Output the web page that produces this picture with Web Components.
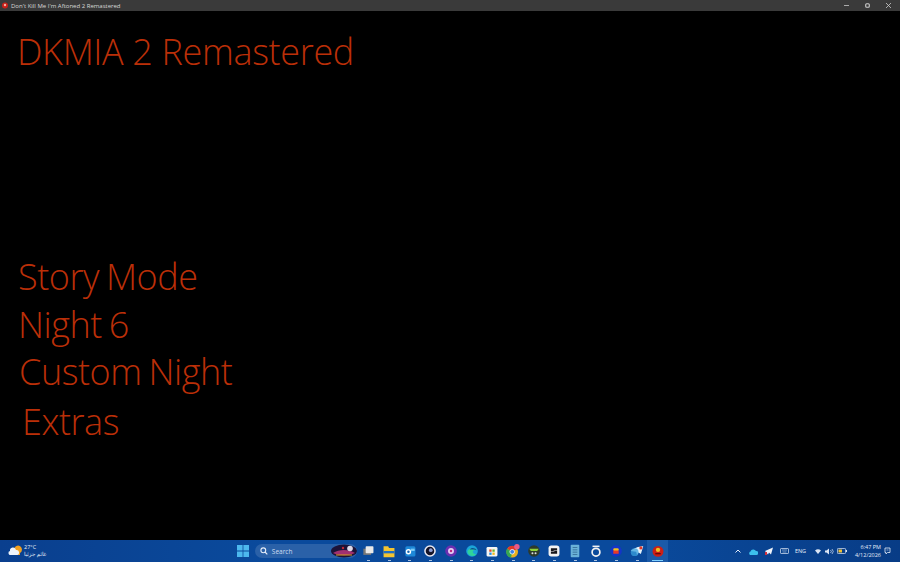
<!DOCTYPE html>
<html lang="en"><head><meta charset="utf-8"><title>DKMIA 2 Remastered</title>
<style>
html,body{margin:0;padding:0;height:100%;background:#000;overflow:hidden}
body{display:flex;flex-direction:column;width:900px;height:562px}
</style></head><body>
<app-titlebar>Don't Kill Me I'm Aftoned 2 Remastered</app-titlebar>
<game-screen>
  <span slot="title">DKMIA 2 Remastered</span>
  <menu-item>Story Mode</menu-item>
  <menu-item>Night 6</menu-item>
  <menu-item>Custom Night</menu-item>
  <menu-item>Extras</menu-item>
</game-screen>
<win-taskbar></win-taskbar>
<script>
function def(name,html,setup){customElements.define(name,class extends HTMLElement{constructor(){super();const r=this.attachShadow({mode:'open'});r.innerHTML=html;}connectedCallback(){setup&&setup(this)}})}

def('app-titlebar',`<style>
:host{display:flex;align-items:center;flex:none;height:11px;background:#3a3a3a;color:#d8d8d8;font:6px/10px "Open Sans",sans-serif}
svg{display:block}
.ic{margin:0 3px 0 2px}
.t{flex:1;white-space:nowrap;padding-top:1px}
.b{display:flex;gap:16px;padding-right:9px;align-items:center;margin-top:-1px}
</style>
<svg class="ic" width="6" height="7" viewBox="0 0 6 7"><circle cx="3" cy="3.500" r="3" fill="#c8201a"/><circle cx="3" cy="3" r="1.200" fill="#f2b0a0"/></svg>
<span class="t"><slot></slot></span>
<span class="b">
<svg width="5" height="5" viewBox="0 0 5 5"><path d="M0 2.500h5" stroke="#aaa" stroke-width="1"/></svg>
<svg width="5" height="5" viewBox="0 0 5 5"><rect x=".7" y=".7" width="3.600" height="3.600" rx="1" fill="none" stroke="#ccc" stroke-width="1.100"/></svg>
<svg width="5" height="5" viewBox="0 0 5 5"><path d="M0 0l5 5M5 0l-5 5" stroke="#ccc" stroke-width=".8"/></svg>
</span>`);

def('game-screen',`<style>
:host{display:flex;flex-direction:column;flex:1;min-height:0;background:#000;color:#bb2f08;font-family:"Open Sans",sans-serif;font-weight:300}
.title{font-size:36px;line-height:42px;letter-spacing:-.35px;padding:20px 0 0 17px;white-space:nowrap}
.menu{display:flex;flex-direction:column;margin-top:180px;padding-left:19px}
</style>
<div class="title"><slot name="title"></slot></div>
<div class="menu"><slot></slot></div>`);

def('menu-item',`<style>
:host{display:block;font-size:36px;line-height:47.500px;letter-spacing:-.45px;word-spacing:-2px;white-space:nowrap}
:host(:last-child){margin-left:3px;margin-top:2.500px}
:host(:nth-child(2)){margin-left:-1px}
:host(:nth-child(3)){margin-left:-1px}
</style><slot></slot>`);

const icons=[
`<rect x="3" y="6" width="10" height="8" fill="#777"/><rect x="6" y="3" width="10" height="9" rx="1" fill="#e8e8e8"/>`,
`<path d="M2 3h6l1 2h7v12H2z" fill="#f4c430"/><rect x="2" y="9" width="14" height="3" fill="#1f6fc4"/>`,
`<rect x="3" y="3" width="13" height="13" rx="2" fill="#1e88d8"/><circle cx="7" cy="10" r="3.500" fill="#fff"/><circle cx="7" cy="10" r="1.600" fill="#1565b0"/><path d="M10 6h5v3h-5z" fill="#7cc8f5"/>`,
`<circle cx="9" cy="9" r="7.500" fill="#e8e8f2"/><circle cx="9" cy="9" r="5.500" fill="#141428"/><circle cx="10" cy="8" r="2.400" fill="#8ea0d8"/>`,
`<circle cx="9" cy="9" r="7.500" fill="#6a2fb0"/><circle cx="9" cy="9" r="3.800" fill="#e6d0f5"/><circle cx="9" cy="9" r="1.600" fill="#c02a80"/>`,
`<circle cx="9" cy="9" r="7.500" fill="#1ba3d8"/><path d="M3 10c1-5 9-7 12-2-3-1-5 0-5 2s3 4 5 3c-3 4-11 3-12-3z" fill="#2fd39a"/><path d="M6 7c3-3 7-2 9 1-3-1-6-1-9-1z" fill="#0b4c95"/>`,
`<rect x="2" y="4" width="14" height="12" rx="1.500" fill="#f4f4f4"/><rect x="5.500" y="7" width="3" height="3" fill="#e24a2a"/><rect x="9.500" y="7" width="3" height="3" fill="#6ab82c"/><rect x="5.500" y="11" width="3" height="3" fill="#2a90e0"/><rect x="9.500" y="11" width="3" height="3" fill="#f4b820"/>`,
`<circle cx="8" cy="10" r="7.500" fill="#e8b020"/><path d="M8 10L1.500 6a7.500 7.500 0 0 1 13 0z" fill="#e0392b"/><path d="M8 10L1.500 6a7.500 7.500 0 0 0 5 11.500z" fill="#34a853"/><circle cx="8" cy="10" r="3" fill="#3a80e8" stroke="#fff"/><circle cx="14" cy="3.500" r="3.500" fill="#e85a8a"/>`,
`<circle cx="9" cy="9" r="7.500" fill="#2c3a2c"/><path d="M3 6h12l-2 3H5z" fill="#8ed03a"/><circle cx="7" cy="12" r="1.300" fill="#ddd"/><circle cx="11" cy="12" r="1.300" fill="#ddd"/>`,
`<rect x="2" y="2" width="14" height="14" rx="3.500" fill="#f2f2f2"/><path d="M5 5.500h8v2.500H8.500v.8H13v3.700H5V10h4.500v-.8H5z" fill="#16161c"/>`,
`<rect x="3.500" y="1" width="11" height="16" rx="1" fill="#6ab2d8"/><path d="M6 4.500h6M6 7.500h6M6 10.500h6M6 13.500h6" stroke="#2a5f88" stroke-width=".9"/>`,
`<circle cx="9" cy="10.500" r="5" fill="none" stroke="#f2f2f2" stroke-width="2.200"/><path d="M4.500 3h9" stroke="#f2f2f2" stroke-width="2"/>`,
`<circle cx="9" cy="9" r="7.500" fill="#1535c8"/><path d="M5.500 10a3.500 3.500 0 0 1 7 0v2.500h-7z" fill="#e8382a"/><rect x="5.500" y="5.500" width="7" height="3" rx="1.500" fill="#f2c020"/>`,
`<path d="M1 9c3-3 10-6 16-6l-3 10-3-2-2 3-1-4z" fill="#e8f4fb"/><circle cx="6" cy="10.500" r="5" fill="#3aa0dc" opacity=".75"/><circle cx="14" cy="5" r="2" fill="#e03a2a"/>`,
`<circle cx="9" cy="9.500" r="7" fill="#cc1f16"/><circle cx="9" cy="7.500" r="2.800" fill="#f0c020"/><path d="M5.500 12.500h7" stroke="#5a0808" stroke-width="1.500"/>`
];

def('win-taskbar',`<style>
:host{display:grid;grid-template-columns:1fr auto 1fr;align-items:center;flex:none;height:22px;background:linear-gradient(90deg,#0a3f8e,#0a4a9c 30%,#0a4a9c 70%,#083c86);color:#e8eef8;font-family:"Open Sans","DejaVu Sans",sans-serif}
svg{display:block}
.wx{display:flex;align-items:center;gap:2px;padding-left:8px}
.wxt{font-size:5.500px;line-height:7px}
.mid{display:flex;align-items:center;margin-left:5px}
.start{width:12px;height:12px;margin-right:6px}
.search{display:flex;align-items:center;width:102px;height:14px;border-radius:7px;background:#2a61a8;box-sizing:border-box;padding-left:5px;font-size:6.500px;gap:4px;color:#cfdcf0;position:relative;overflow:hidden;margin-right:1px}
.logo{position:absolute;right:0;top:0}
.apps{display:flex}
.app{width:20.700px;height:22px;display:flex;align-items:center;justify-content:center;position:relative}
.app.on{background:#1a5aa8}
.app::after{content:"";position:absolute;left:9px;bottom:1px;width:3px;height:1px;background:#a8c0e0}
.app.on::after{left:5px;width:11px;background:#7fd0ff}
.tray{display:flex;align-items:center;justify-content:flex-end;font-size:5.500px;color:#e4ecf8}
.s{display:flex;justify-content:center;align-items:center}
.clk{text-align:right;line-height:8px;width:32px;font-size:5.500px}
</style>
<div class="wx">
<svg width="14" height="14" viewBox="0 0 14 14"><path d="M6 5a4 4 0 1 1 6 4v2H6z" fill="#f0a020"/><path d="M2 7a3 3 0 0 1 6-1 2.500 2.500 0 0 1 1 5H3a2 2 0 0 1-1-4z" fill="#eef3fa"/></svg>
<div class="wxt"><div>27°C</div><div lang="ar" dir="rtl">غائم جزئيا</div></div>
</div>
<div class="mid">
<svg class="start" viewBox="0 0 12 12"><path d="M0 0h5.600v5.600H0zM6.400 0H12v5.600H6.400zM0 6.400h5.600V12H0zM6.400 6.400H12V12H6.400z" fill="#4cb8ee"/></svg>
<div class="search">
<svg width="8" height="8" viewBox="0 0 8 8"><circle cx="3.300" cy="3.300" r="2.400" fill="none" stroke="#e4ecf8" stroke-width="1.100"/><path d="M5 5l2.300 2.300" stroke="#e4ecf8" stroke-width="1.200"/></svg>
<span>Search</span>
<svg class="logo" width="26" height="14" viewBox="0 0 26 14"><ellipse cx="13" cy="7" rx="13" ry="6.500" fill="#1c1238"/><path d="M2 9c6-4 16-4 22 0-6 3-16 3-22 0z" fill="#a03070"/><path d="M5 11l16 0" stroke="#d8a020"/><circle cx="19" cy="4.500" r="2.800" fill="#dcd8e8"/><circle cx="12" cy="4" r="1.200" fill="#c02838"/></svg>
</div>
<div class="apps" id="apps"></div>
</div>
<div class="tray">
<span class="s" style="width:16px"><svg width="6" height="4" viewBox="0 0 6 4"><path d="M.5 3.500L3 1l2.500 2.500" fill="none" stroke="#e4ecf8"/></svg></span>
<span class="s" style="width:15px"><svg width="9" height="7" viewBox="0 0 9 7"><path d="M1 7a2 2 0 0 1 .5-3.500A3 3 0 0 1 7 3a2 2 0 0 1 .5 4z" fill="#3cc0ec"/></svg></span>
<span class="s" style="width:15px"><svg width="8" height="8" viewBox="0 0 8 8"><path d="M0 4l8-3.500-2 7-2-2-1 2z" fill="#f0f4fa"/><rect x="0" y="5" width="2" height="3" fill="#d03040"/></svg></span>
<span class="s" style="width:16px"><svg width="9" height="6" viewBox="0 0 9 6"><rect x=".5" y=".5" width="8" height="5" rx=".6" fill="none" stroke="#c8d6ea" stroke-width=".8"/><path d="M2 2h5M2.500 4h4" stroke="#c8d6ea" stroke-width=".6"/></svg></span>
<span class="s" style="width:17px">ENG</span>
<span class="s" style="width:12px;margin-left:3px"><svg width="6" height="5" viewBox="0 0 6 5"><path d="M0 1.500a4.500 4.500 0 0 1 6 0L3 5z" fill="#dbe5f4"/></svg></span>
<span class="s" style="width:11px"><svg width="9" height="7" viewBox="0 0 9 7"><path d="M0 2.500h1.500L4 .5v6L1.500 4.500H0z" fill="#dbe5f4"/><path d="M5.500 2a2 2 0 0 1 0 3M7 1a3.500 3.500 0 0 1 0 5" fill="none" stroke="#dbe5f4" stroke-width=".7"/></svg></span>
<span class="s" style="width:14px"><svg width="10" height="6" viewBox="0 0 10 6"><rect x=".4" y=".4" width="8.200" height="5.200" rx="1" fill="none" stroke="#dbe5f4" stroke-width=".8"/><rect x="1.500" y="1.500" width="3.500" height="3" fill="#f0c030"/><rect x="9" y="2" width="1" height="2" fill="#dbe5f4"/></svg></span>
<span class="clk"><div>6:47 PM</div><div>4/12/2026</div></span>
<span class="s" style="width:13px;padding-right:6px"><svg width="7" height="8" viewBox="0 0 7 8"><path d="M1 1h5v4.500H3.500L2 7V5.500H1z" fill="none" stroke="#e4ecf8" stroke-width=".8"/><path d="M2.500 3h2" stroke="#e4ecf8" stroke-width=".6"/></svg></span>
</div>`,el=>{
 const a=el.shadowRoot.getElementById('apps');
 icons.forEach((p,i)=>{const d=document.createElement('div');d.className='app'+(i==14?' on':'');d.innerHTML=`<svg width="14" height="14" viewBox="0 0 18 18">${p}</svg>`;a.appendChild(d)});
});
</script>
</body></html>
